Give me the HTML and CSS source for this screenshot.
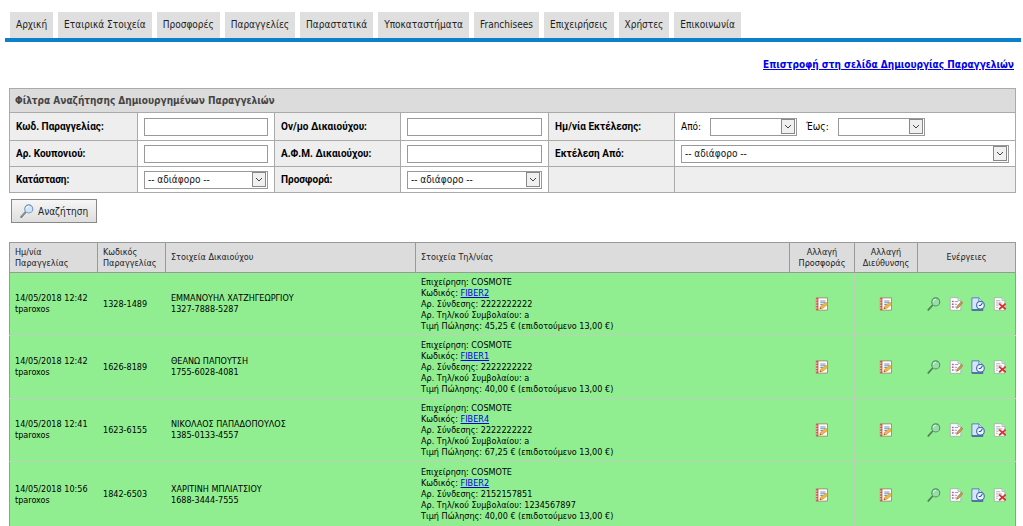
FILE: index.html
```html
<!DOCTYPE html>
<html lang="el">
<head>
<meta charset="utf-8">
<title>Παραγγελίες</title>
<link rel="stylesheet" href="styles.css">
</head>
<body>
<svg class="sprite" aria-hidden="true">
  <symbol id="lens" viewBox="0 0 16 16">
    <path d="M1.5 14.8 6.3 9.4" stroke="#5b6b78" stroke-width="2.2" stroke-linecap="round"/>
    <path d="M1.6 14.3 5.9 9.5" stroke="#c3ccd3" stroke-width=".8"/>
    <circle cx="10" cy="5.6" r="4.6" fill="#cfe6fa" stroke="#7392b5" stroke-width="1.2"/>
    <path d="M7.2 5.2A3 3 0 0 1 10.2 2.6" fill="none" stroke="#fff" stroke-width="1.2"/>
  </symbol>
  <symbol id="lens-green" viewBox="0 0 16 16">
    <path d="M1.5 14.8 6.3 9.4" stroke="#53805b" stroke-width="2" stroke-linecap="round"/>
    <circle cx="10" cy="5.6" r="4.6" fill="#98dda8" stroke="#4f8f68" stroke-width="1.2"/>
    <path d="M7.2 5.2A3 3 0 0 1 10.2 2.6" fill="none" stroke="#dcffe2" stroke-width="1.2"/>
  </symbol>
  <symbol id="book" viewBox="0 0 16 16">
    <path d="M1.5 1h12.8v14H1.5z" fill="#fff" stroke="#a08468"/>
    <path d="M1.5 1h2.4v14H1.5z" fill="#c8553c"/>
    <path d="M1 3.5h2M1 6.5h2M1 9.5h2M1 12.5h2" stroke="#f3ddcf"/>
    <path d="M6 4.5h6M6 6.5h6M6 8.5h3" stroke="#6d93c4" stroke-width="1.2"/>
    <path d="m5.5 13.5 1-3 6.2-4.6 2 2.3L8.5 13z" fill="#f5b63f" stroke="#d58a2a" stroke-width=".7"/>
    <path d="m5.5 13.5.5-1.6 1.2 1.3z" fill="#4b3a2a"/>
  </symbol>
  <symbol id="edit" viewBox="0 0 16 16">
    <path d="M1.5.8h8.8l3.2 3.2v11.2h-12z" fill="#fff" stroke="#9aa8a0" stroke-width=".8"/>
    <path d="M10.3.8V4h3.2" fill="#dce6ea" stroke="#9aa8a0" stroke-width=".8"/>
    <path d="M3.3 5.2h2M3.3 8.3h2M3.3 11.4h2" stroke="#b45ca0" stroke-width="1.6"/>
    <path d="M6.5 5.2h4M6.5 8.3h3M6.5 11.4h2" stroke="#8592ad"/>
    <path d="m8.7 13 .7-2.4L14.2 5l1.6 1.4-4.8 5.5z" fill="#dc9a4f" stroke="#8f5d35" stroke-width=".7"/>
  </symbol>
  <symbol id="history" viewBox="0 0 16 16">
    <path d="M1 1h8l4 4v10H1z" fill="#d5e6fb" stroke="#4c75b5"/>
    <path d="M9 1v4h4" fill="#fff" stroke="#4c75b5"/>
    <path d="M1 14.8h13" stroke="#345690" stroke-width="1.5"/>
    <circle cx="10.8" cy="9.4" r="4.4" fill="#eef6ff" stroke="#4b70ad" stroke-width="1.4"/>
    <path d="M10.8 9.8 13 7M10.8 9.8H8.9" fill="none" stroke="#31578f" stroke-width="1.2"/>
  </symbol>
  <symbol id="remove" viewBox="0 0 16 16">
    <path d="M1.5.8h8.8l3.2 3.2v11.2h-12z" fill="#fff" stroke="#9aa8a0" stroke-width=".8"/>
    <path d="M10.3.8V4h3.2" fill="#dce6ea" stroke="#9aa8a0" stroke-width=".8"/>
    <path d="M3.5 4.3h5M3.5 6.8h7M3.5 9.3h3M3.5 11.8h2" stroke="#a6a2ad"/>
    <path d="m7 7.5 7.5 6.5M14.5 7.5 7 14" stroke="#dc2f35" stroke-width="2"/>
  </symbol>
</svg>

<nav class="menu">
  <a href="#">Αρχική</a>
  <a href="#">Εταιρικά Στοιχεία</a>
  <a href="#">Προσφορές</a>
  <a href="#">Παραγγελίες</a>
  <a href="#">Παραστατικά</a>
  <a href="#">Υποκαταστήματα</a>
  <a href="#">Franchisees</a>
  <a href="#">Επιχειρήσεις</a>
  <a href="#">Χρήστες</a>
  <a href="#">Επικοινωνία</a>
</nav>

<main class="content">
  <p class="back"><a href="#">Επιστροφή στη σελίδα Δημιουργίας Παραγγελιών</a></p>

  <form>
    <table class="filters">
      <colgroup><col class="f1"><col class="f2"><col class="f3"><col class="f4"><col class="f5"><col></colgroup>
      <thead>
        <tr><th colspan="6">Φίλτρα Αναζήτησης Δημιουργημένων Παραγγελιών</th></tr>
      </thead>
      <tbody>
        <tr class="first">
          <th><label for="code">Κωδ. Παραγγελίας:</label></th>
          <td><input id="code" type="text"></td>
          <th><label for="name">Ον/μο Δικαιούχου:</label></th>
          <td><input id="name" type="text"></td>
          <th>Ημ/νία Εκτέλεσης:</th>
          <td>
            <div class="dates">
              <label for="from">Από:</label>
              <select id="from"><option></option></select>
              <label for="to">Έως:</label>
              <select id="to"><option></option></select>
            </div>
          </td>
        </tr>
        <tr>
          <th><label for="coupon">Αρ. Κουπονιού:</label></th>
          <td><input id="coupon" type="text"></td>
          <th><label for="vat">Α.Φ.Μ. Δικαιούχου:</label></th>
          <td><input id="vat" type="text"></td>
          <th><label for="by">Εκτέλεση Από:</label></th>
          <td><select id="by"><option>-- αδιάφορο --</option></select></td>
        </tr>
        <tr>
          <th><label for="state">Κατάσταση:</label></th>
          <td><select id="state"><option>-- αδιάφορο --</option></select></td>
          <th><label for="offer">Προσφορά:</label></th>
          <td><select id="offer"><option>-- αδιάφορο --</option></select></td>
          <th></th>
          <td class="empty"></td>
        </tr>
      </tbody>
    </table>
    <button class="search" type="submit"><svg><use href="#lens"/></svg>Αναζήτηση</button>
  </form>

  <table class="results">
    <colgroup><col class="r1"><col class="r2"><col class="r3"><col><col class="r5"><col class="r6"><col class="r7"></colgroup>
    <thead>
      <tr>
        <th>Ημ/νία<br>Παραγγελίας</th>
        <th>Κωδικός<br>Παραγγελίας</th>
        <th>Στοιχεία Δικαιούχου</th>
        <th>Στοιχεία Τηλ/νίας</th>
        <th class="mid">Αλλαγή<br>Προσφοράς</th>
        <th class="mid">Αλλαγή<br>Διεύθυνσης</th>
        <th class="mid">Ενέργειες</th>
      </tr>
    </thead>
    <tbody>
      <tr>
        <td>14/05/2018 12:42<br>tparoxos</td>
        <td>1328-1489</td>
        <td>ΕΜΜΑΝΟΥΗΛ ΧΑΤΖΗΓΕΩΡΓΙΟΥ<br>1327-7888-5287</td>
        <td>Επιχείρηση: COSMOTE<br>Κωδικός: <a href="#">FIBER2</a><br>Αρ. Σύνδεσης: 2222222222<br>Αρ. Τηλ/κού Συμβολαίου: a<br>Τιμή Πώλησης: 45,25 € (επιδοτούμενο 13,00 €)</td>
        <td><div class="icons"><button aria-label="Αλλαγή προσφοράς"><svg><use href="#book"/></svg></button></div></td>
        <td><div class="icons"><button aria-label="Αλλαγή διεύθυνσης"><svg><use href="#book"/></svg></button></div></td>
        <td><div class="icons"><button aria-label="Προβολή"><svg><use href="#lens-green"/></svg></button><button aria-label="Επεξεργασία"><svg><use href="#edit"/></svg></button><button aria-label="Ιστορικό"><svg><use href="#history"/></svg></button><button aria-label="Διαγραφή"><svg><use href="#remove"/></svg></button></div></td>
      </tr>
      <tr>
        <td>14/05/2018 12:42<br>tparoxos</td>
        <td>1626-8189</td>
        <td>ΘΕΑΝΩ ΠΑΠΟΥΤΣΗ<br>1755-6028-4081</td>
        <td>Επιχείρηση: COSMOTE<br>Κωδικός: <a href="#">FIBER1</a><br>Αρ. Σύνδεσης: 2222222222<br>Αρ. Τηλ/κού Συμβολαίου: a<br>Τιμή Πώλησης: 40,00 € (επιδοτούμενο 13,00 €)</td>
        <td><div class="icons"><button aria-label="Αλλαγή προσφοράς"><svg><use href="#book"/></svg></button></div></td>
        <td><div class="icons"><button aria-label="Αλλαγή διεύθυνσης"><svg><use href="#book"/></svg></button></div></td>
        <td><div class="icons"><button aria-label="Προβολή"><svg><use href="#lens-green"/></svg></button><button aria-label="Επεξεργασία"><svg><use href="#edit"/></svg></button><button aria-label="Ιστορικό"><svg><use href="#history"/></svg></button><button aria-label="Διαγραφή"><svg><use href="#remove"/></svg></button></div></td>
      </tr>
      <tr>
        <td>14/05/2018 12:41<br>tparoxos</td>
        <td>1623-6155</td>
        <td>ΝΙΚΟΛΑΟΣ ΠΑΠΑΔΟΠΟΥΛΟΣ<br>1385-0133-4557</td>
        <td>Επιχείρηση: COSMOTE<br>Κωδικός: <a href="#">FIBER4</a><br>Αρ. Σύνδεσης: 2222222222<br>Αρ. Τηλ/κού Συμβολαίου: a<br>Τιμή Πώλησης: 67,25 € (επιδοτούμενο 13,00 €)</td>
        <td><div class="icons"><button aria-label="Αλλαγή προσφοράς"><svg><use href="#book"/></svg></button></div></td>
        <td><div class="icons"><button aria-label="Αλλαγή διεύθυνσης"><svg><use href="#book"/></svg></button></div></td>
        <td><div class="icons"><button aria-label="Προβολή"><svg><use href="#lens-green"/></svg></button><button aria-label="Επεξεργασία"><svg><use href="#edit"/></svg></button><button aria-label="Ιστορικό"><svg><use href="#history"/></svg></button><button aria-label="Διαγραφή"><svg><use href="#remove"/></svg></button></div></td>
      </tr>
      <tr>
        <td>14/05/2018 10:56<br>tparoxos</td>
        <td>1842-6503</td>
        <td>ΧΑΡΙΤΙΝΗ ΜΠΛΙΑΤΣΙΟΥ<br>1688-3444-7555</td>
        <td>Επιχείρηση: COSMOTE<br>Κωδικός: <a href="#">FIBER2</a><br>Αρ. Σύνδεσης: 2152157851<br>Αρ. Τηλ/κού Συμβολαίου: 1234567897<br>Τιμή Πώλησης: 40,00 € (επιδοτούμενο 13,00 €)</td>
        <td><div class="icons"><button aria-label="Αλλαγή προσφοράς"><svg><use href="#book"/></svg></button></div></td>
        <td><div class="icons"><button aria-label="Αλλαγή διεύθυνσης"><svg><use href="#book"/></svg></button></div></td>
        <td><div class="icons"><button aria-label="Προβολή"><svg><use href="#lens-green"/></svg></button><button aria-label="Επεξεργασία"><svg><use href="#edit"/></svg></button><button aria-label="Ιστορικό"><svg><use href="#history"/></svg></button><button aria-label="Διαγραφή"><svg><use href="#remove"/></svg></button></div></td>
      </tr>
    </tbody>
  </table>
</main>
</body>
</html>
```
FILE: styles.css
```css
* { box-sizing: border-box; }

body {
  margin: 0;
  background: #fff;
  color: #000;
  font-family: "DejaVu Sans Condensed", "Noto Sans", sans-serif;
  font-size: 10px;
}

.sprite { display: none; }

.menu {
  display: flex;
  gap: 5px;
  margin: 0 2px 0 5px;
  padding: 12px 5px 0;
  border-bottom: 4px solid #0c80cb;
}
.menu a {
  padding: 0 6px;
  background: #dfdfdf;
  color: #222;
  line-height: 26px;
  text-decoration: none;
  white-space: nowrap;
}

.content { padding: 0 7px 0 9px; }

.back {
  margin: 0;
  padding: 15px 2px 15px 0;
  font-weight: bold;
  line-height: 16px;
  text-align: right;
}

a { color: #00e; }

table {
  width: 100%;
  border-collapse: collapse;
  table-layout: fixed;
}
th, td { text-align: left; white-space: nowrap; }

.filters th, .filters td {
  height: 26px;
  padding: 0 6px;
  border: 1px solid #aaa;
}
.filters thead th {
  height: 24px;
  padding: 0 5px;
  background: #dcdcdc;
  color: #444;
}
.filters tbody th {
  background: #eee;
  font-family: Roboto, "DejaVu Sans Condensed", sans-serif;
}
.filters .first th, .filters .first td { height: 28px; }
.filters .empty { background: #eee; }
.f1 { width: 128px; }
.f2 { width: 137px; }
.f3 { width: 126px; }
.f4 { width: 148px; }
.f5 { width: 126px; }

input, select {
  display: block;
  width: 100%;
  height: 18px;
  margin: 0;
  padding: 0 3px;
  border: 1px solid #999;
  border-radius: 0;
  background: #fff;
  color: #111;
  font-family: inherit;
  font-size: 10px;
}
select {
  appearance: none;
  background: #fff url("data:image/svg+xml,%3Csvg xmlns='http://www.w3.org/2000/svg' width='15' height='16'%3E%3Crect x='.5' y='.5' width='13' height='14' fill='%23f0f0f0' stroke='%23888'/%3E%3Cpath d='M4 6l3 3 3-3' fill='none' stroke='%23444'/%3E%3C/svg%3E") right center no-repeat;
}
.dates {
  display: flex;
  align-items: center;
  gap: 9px;
}
.dates select { width: 87px; }

.search {
  display: flex;
  align-items: center;
  gap: 4px;
  height: 24px;
  margin: 6px 0 19px 2px;
  padding: 0 8px;
  border: 1px solid #888;
  background: linear-gradient(#f6f6f6, #dedede);
  color: #222;
  font-family: inherit;
  font-size: 10px;
}
.search svg { width: 14px; height: 14px; }

.results {
  border: 1px solid #999;
  font-size: 9px;
  line-height: 11px;
}
.results th {
  height: 30px;
  padding: 0 5px;
  border: 1px solid #999;
  background: #dcdcdc;
  color: #222;
  font-weight: normal;
}
.results .mid { text-align: center; }
.results td {
  height: 63px;
  padding: 0 5px;
  border: 1px solid #b9d2b9;
  background: #90ee90;
}
.results tbody tr:last-child td { height: 66px; }
.results tr > :first-child { border-left-color: #999; }
.results tr > :last-child { border-right-color: #999; }
.r1 { width: 88px; }
.r2 { width: 68px; }
.r3 { width: 250px; }
.r5 { width: 65px; }
.r6 { width: 63px; }
.r7 { width: 98px; }

.icons {
  display: flex;
  justify-content: center;
  gap: 8px;
}
.icons button {
  display: block;
  padding: 0;
  border: 0;
  background: none;
}
.icons svg { display: block; width: 14px; height: 14px; }
```
